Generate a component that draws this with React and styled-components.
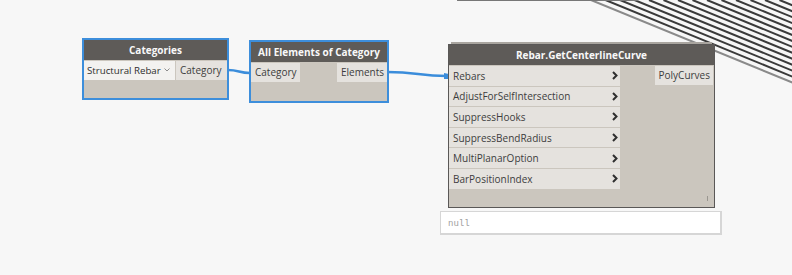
import styled, { createGlobalStyle } from 'styled-components';

const GlobalStyle = createGlobalStyle`
    html, body {
        margin: 0;
        padding: 0;
        background: #f7f7f7;
    }
    body {
        font-family: "Open Sans", "Noto Sans", sans-serif;
        font-size: 10px;
        color: #3d3d3d;
    }
`;

const inputs = [
    'Rebars',
    'AdjustForSelfIntersection',
    'SuppressHooks',
    'SuppressBendRadius',
    'MultiPlanarOption',
    'BarPositionIndex',
];

// wires fanning out from the node above the view
const stripes = Array.from({ length: 15 }, (_, i) => 591 + i * 14.5);

function Chevron() {
    return (
        <svg width="6" height="9" viewBox="0 0 6 9">
            <polyline points="1,1 4.5,4.5 1,8" fill="none" stroke="#2f2f2f" strokeWidth="2" />
        </svg>
    );
}

function Caret() {
    return (
        <svg width="6" height="4" viewBox="0 0 6 4">
            <polyline points="0.5,0.5 3,3 5.5,0.5" fill="none" stroke="#8c8c8c" strokeWidth="1" />
        </svg>
    );
}

function Wires() {
    return (
        <WireLayer width="792" height="275">
            {stripes.map((x0, i) => (
                <line
                    key={x0}
                    x1={x0}
                    y1={0}
                    x2={810}
                    y2={(810 - x0) * 0.41}
                    stroke={i === 0 ? '#8a8a8a' : '#3a3a3a'}
                    strokeWidth="2"
                />
            ))}
            <path d="M228 70 C 239 70, 239 73, 250 73" fill="none" stroke="#3b8ddb" strokeWidth="2.5" />
            <path d="M387 72 C 418 72, 418 76, 447 76" fill="none" stroke="#3b8ddb" strokeWidth="2.5" />
            <rect x="226" y="67" width="3" height="6" fill="#3b8ddb" />
            <rect x="249" y="70" width="3" height="6" fill="#3b8ddb" />
            <rect x="386" y="69" width="3" height="6" fill="#3b8ddb" />
            <path d="M444 73 L449 74 L449 79 L444 79 Z" fill="#3b8ddb" />
        </WireLayer>
    );
}

export default function App() {
    return (
        <>
            <GlobalStyle />
            <Canvas>
                <Wires />
                <HiddenNode />

                <Node $x={82} $y={38} $w={147} $h={62} $selected>
                    <Header>Categories</Header>
                    <PortRow>
                        <Dropdown>
                            Structural Rebar
                            <Caret />
                        </Dropdown>
                        <PortLabel $grow>Category</PortLabel>
                    </PortRow>
                </Node>

                <Node $x={249} $y={40} $w={140} $h={63} $selected>
                    <Header>All Elements of Category</Header>
                    <PortRow $split>
                        <PortLabel>Category</PortLabel>
                        <PortLabel>Elements</PortLabel>
                    </PortRow>
                </Node>

                <Node $x={448} $y={44} $w={267} $h={164} $stacked>
                    <Header>Rebar.GetCenterlineCurve</Header>
                    <Ports>
                        <Inputs>
                            {inputs.map((name) => (
                                <InputRow key={name}>
                                    {name}
                                    <Chevron />
                                </InputRow>
                            ))}
                        </Inputs>
                        <Outputs>
                            <PortLabel>PolyCurves</PortLabel>
                        </Outputs>
                    </Ports>
                    <Grip />
                </Node>

                <Preview>null</Preview>
            </Canvas>
        </>
    );
}

const Canvas = styled.div`
    position: relative;
    width: 792px;
    height: 275px;
    overflow: hidden;
    background: #f7f7f7;
`;

const WireLayer = styled.svg`
    position: absolute;
    left: 0;
    top: 0;
`;

const HiddenNode = styled.div`
    position: absolute;
    left: 457px;
    top: -12px;
    width: 181px;
    height: 13px;
    box-sizing: border-box;
    background: #cbc6be;
    border: 1px solid #8a8a8a;
    border-bottom: 2px solid #777;
`;

const Node = styled.div`
    position: absolute;
    left: ${(p) => p.$x}px;
    top: ${(p) => p.$y}px;
    width: ${(p) => p.$w}px;
    height: ${(p) => p.$h}px;
    box-sizing: border-box;
    display: flex;
    flex-direction: column;
    background: #cbc6be;
    border: ${(p) => (p.$selected ? '2px solid #3d8edb' : '1px solid #5a5857')};

    ${(p) =>
        p.$stacked &&
        `
        &::before {
            content: '';
            position: absolute;
            left: 2px;
            right: 2px;
            top: -3px;
            height: 2px;
            background: #a9a59f;
        }
    `}
`;

const Header = styled.div`
    height: 20px;
    flex: none;
    background: #5e5b58;
    color: #f8f8f8;
    font-weight: 700;
    font-size: 10px;
    line-height: 20px;
    text-align: center;
    white-space: nowrap;
`;

const PortRow = styled.div`
    display: flex;
    justify-content: ${(p) => (p.$split ? 'space-between' : 'flex-start')};
    gap: 1px;
    margin-top: 1px;
    height: 19px;
`;

const PortLabel = styled.div`
    ${(p) => p.$grow && 'flex: 1;'}
    height: 19px;
    line-height: 19px;
    padding: 0 3px 0 4px;
    background: #e5e2de;
    color: #3d3d3d;
    white-space: nowrap;
`;

const Dropdown = styled.div`
    width: 91px;
    box-sizing: border-box;
    display: flex;
    align-items: center;
    justify-content: space-between;
    padding: 0 5px 0 3px;
    background: #f3f2f0;
    color: #2e2e2e;
    font-size: 9.7px;
    white-space: nowrap;

    svg {
        flex: none;
        margin-top: -1px;
    }
`;

const Ports = styled.div`
    display: flex;
    justify-content: space-between;
    margin-top: 1px;
`;

const Inputs = styled.div`
    display: flex;
    flex-direction: column;
    gap: 1px;
    width: 171px;
`;

const InputRow = styled.div`
    height: 19.6px;
    display: flex;
    align-items: center;
    justify-content: space-between;
    padding: 0 2px 0 4px;
    background: #e5e2de;
    color: #3d3d3d;
    white-space: nowrap;

    svg {
        flex: none;
    }
`;

const Outputs = styled.div`
    display: flex;
    flex-direction: column;
    align-items: flex-end;
    margin-right: 1px;
`;

const Grip = styled.div`
    position: absolute;
    right: 6px;
    bottom: 6px;
    width: 1px;
    height: 5px;
    background: #9a9690;
`;

const Preview = styled.div`
    position: absolute;
    left: 440px;
    top: 211px;
    width: 282px;
    height: 24px;
    box-sizing: border-box;
    background: #fff;
    border: 1px solid #d6d6d6;
    border-right-width: 2px;
    border-bottom-width: 2px;
    padding-left: 7px;
    font-family: "Liberation Mono", "DejaVu Sans Mono", monospace;
    font-size: 9px;
    line-height: 24px;
    color: #a0a0a0;
`;
